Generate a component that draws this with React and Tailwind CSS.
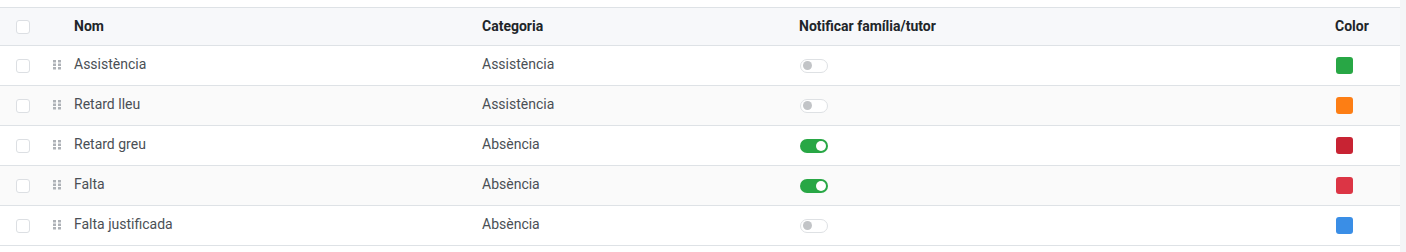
import React from "react";

const rows = [
  { nom: "Assistència", categoria: "Assistència", notify: false, color: "bg-[#28a745]" },
  { nom: "Retard lleu", categoria: "Assistència", notify: false, color: "bg-[#fd7e14]" },
  { nom: "Retard greu", categoria: "Absència", notify: true, color: "bg-[#c82333]" },
  { nom: "Falta", categoria: "Absència", notify: true, color: "bg-[#dc3545]" },
  { nom: "Falta justificada", categoria: "Absència", notify: false, color: "bg-[#3a8ee6]" },
];

function Checkbox() {
  return <div className="w-[14px] h-[14px] rounded-[3px] border border-[#dcdfe3] bg-white" />;
}

function DragHandle() {
  return (
    <svg width="8" height="10" viewBox="0 0 8 10" className="shrink-0 mb-[2px]">
      {[0, 3.5, 7].map((y) => (
        <g key={y} fill="#aeb2b7">
          <rect x="0" y={y} width="3" height="2.5" />
          <rect x="5" y={y} width="3" height="2.5" />
        </g>
      ))}
    </svg>
  );
}

function Toggle({ on }) {
  if (on) {
    return (
      <div className="w-[28px] h-[14px] rounded-full bg-[#28a745] flex items-center justify-end pr-[2px]">
        <span className="w-[10px] h-[10px] rounded-full bg-white" />
      </div>
    );
  }
  return (
    <div className="w-[28px] h-[14px] rounded-full border border-[#dee1e4] bg-white flex items-center pl-[2px]">
      <span className="w-[9px] h-[9px] rounded-full bg-[#c2c4c7]" />
    </div>
  );
}

export default function App() {
  return (
    <div className="flex w-[1406px] h-[252px] bg-white" style={{ fontFamily: "Roboto, 'Liberation Sans', sans-serif" }}>
      <div className="w-[1400px] pt-[7px]">
        <div className="border-t border-[#dee2e6]">
          <div className="grid grid-cols-[74px_408px_317px_536px_1fr] h-[38px] items-center bg-[#f7f8fa] border-b border-[#dee2e6] text-[14px] font-bold text-[#212529]">
            <div className="pl-[16px]">
              <Checkbox />
            </div>
            <div>Nom</div>
            <div>Categoria</div>
            <div>Notificar família/tutor</div>
            <div>Color</div>
          </div>
          {rows.map((r, i) => (
            <div
              key={r.nom}
              className={`grid grid-cols-[74px_408px_317px_536px_1fr] h-[40px] items-center border-b border-[#dee2e6] text-[14px] text-[#4a4f55] ${i % 2 === 1 ? "bg-[#fafafa]" : "bg-white"}`}
            >
              <div className="pl-[16px] flex items-center gap-[23px]">
                <Checkbox />
                <DragHandle />
              </div>
              <div className="mb-[2px]">{r.nom}</div>
              <div className="mb-[2px]">{r.categoria}</div>
              <div className="pl-[1px]">
                <Toggle on={r.notify} />
              </div>
              <div className="pl-[1px]">
                <div className={`w-[17px] h-[17px] rounded-[3px] ${r.color}`} />
              </div>
            </div>
          ))}
        </div>
      </div>
      <div className="w-[6px] bg-[#f4f5f7]" />
    </div>
  );
}
